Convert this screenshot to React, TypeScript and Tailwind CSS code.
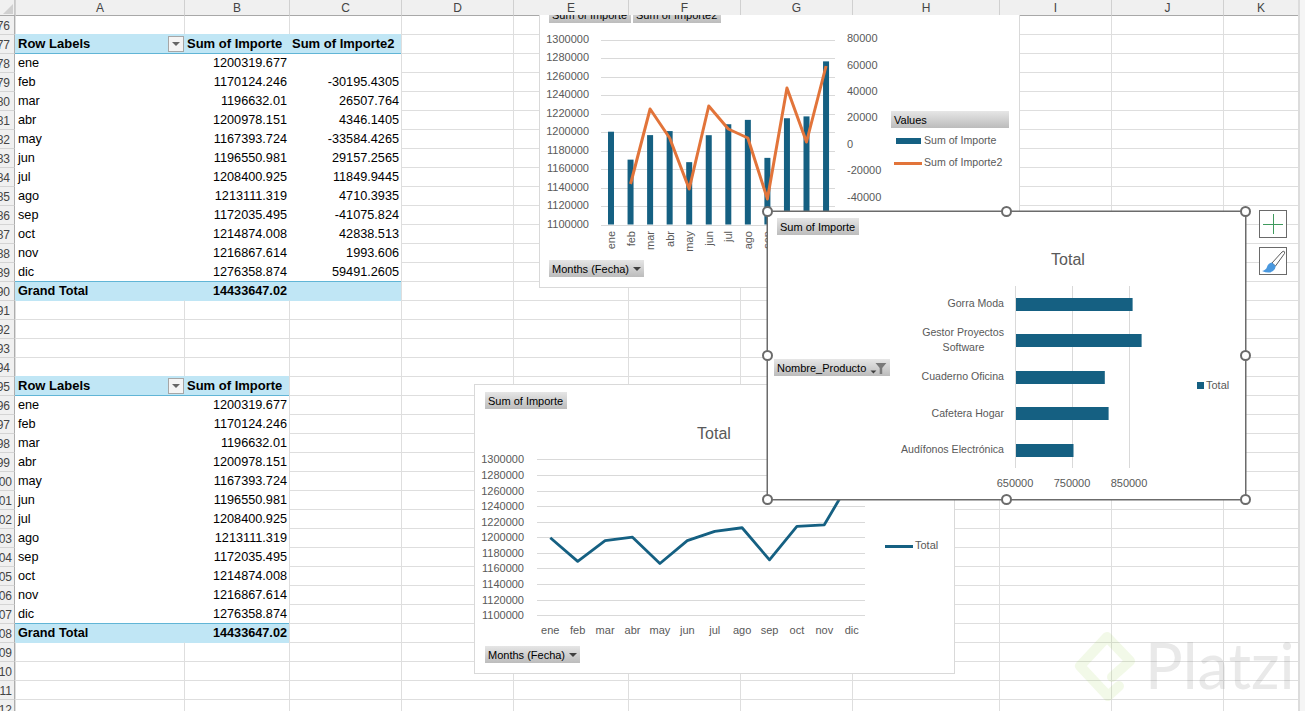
import React from "react";

const colW = ["w-[169px]", "w-[105px]", "w-[112px]", "w-[112px]", "w-[115px]", "w-[112px]", "w-[112px]", "w-[147px]", "w-[112px]", "w-[112px]", "w-[75px]"];
const colN = ["A", "B", "C", "D", "E", "F", "G", "H", "I", "J", "K"];
const months = ["ene", "feb", "mar", "abr", "may", "jun", "jul", "ago", "sep", "oct", "nov", "dic"];
const imp = ["1200319.677", "1170124.246", "1196632.01", "1200978.151", "1167393.724", "1196550.981", "1208400.925", "1213111.319", "1172035.495", "1214874.008", "1216867.614", "1276358.874"];
const diff = ["", "-30195.4305", "26507.764", "4346.1405", "-33584.4265", "29157.2565", "11849.9445", "4710.3935", "-41075.824", "42838.513", "1993.606", "59491.2605"];
const vals = imp.map(Number);

type Kind = "head" | "body" | "first" | "total";
function tableCells(r: number): { kind: Kind; texts: string[] } | null {
  if (r >= 77 && r <= 90) {
    if (r === 77) return { kind: "head", texts: ["Row Labels", "Sum of Importe", "Sum of Importe2"] };
    if (r === 90) return { kind: "total", texts: ["Grand Total", "14433647.02", ""] };
    return { kind: r === 78 ? "first" : "body", texts: [months[r - 78], imp[r - 78], diff[r - 78]] };
  }
  if (r >= 95 && r <= 108) {
    if (r === 95) return { kind: "head", texts: ["Row Labels", "Sum of Importe"] };
    if (r === 108) return { kind: "total", texts: ["Grand Total", "14433647.02"] };
    return { kind: r === 96 ? "first" : "body", texts: [months[r - 96], imp[r - 96]] };
  }
  return null;
}

function Cell({ i, text, kind, top }: { i: number; text?: string; kind?: Kind; top?: string }) {
  const w = colW[i];
  if (!kind) return <div className={`${w} h-full shrink-0 border-l border-l-[#dedede] border-t ${top ?? "border-t-[#dedede]"}`} />;
  const fill =
    kind === "head"
      ? "bg-[#c0e6f5] font-bold text-[13px] pt-[1px]"
      : kind === "total"
        ? "bg-[#c0e6f5] border-t border-[#61b5d6] font-bold text-[12.700px] pt-[1px]"
        : kind === "first"
          ? "bg-white border-t border-[#61b5d6] text-[12.700px] pt-[2px]"
          : "bg-white text-[12.700px] pt-[3px]";
  const align = kind === "head" || i === 0 ? "justify-start pl-[3px]" : "justify-end pr-[2px]";
  return (
    <div className={`${w} ${fill} ${align} relative h-full shrink-0 flex items-center whitespace-nowrap text-black`}>
      {text}
      {kind === "head" && i === 0 && (
        <div className="absolute right-[0px] top-[2px] w-[16px] h-[16px] bg-[#f4f4f4] border border-[#a6a6a6] flex items-center justify-center">
          <div className="w-0 h-0 border-l-[4px] border-r-[4px] border-t-[4px] border-l-transparent border-r-transparent border-t-[#666666]" />
        </div>
      )}
    </div>
  );
}

function Row({ r }: { r: number }) {
  const t = tableCells(r);
  const filledAbove = r === 91 ? 3 : r === 109 ? 2 : 0;
  return (
    <div className="flex h-[19px] shrink-0">
      <div className={`w-[15px] h-full shrink-0 flex items-center justify-end pt-[1px] bg-[#f0f0f0] border-r border-r-[#adadad] border-t ${r === 76 ? "border-t-[#a8a8a8]" : "border-t-[#d4d4d4]"} text-[12px] text-[#444444] whitespace-nowrap ${r < 100 ? "pr-[4px]" : "pr-[2px]"}`}>
        {r}
      </div>
      {colW.map((_, i) =>
        t && i < t.texts.length ? (
          <Cell key={i} i={i} text={t.texts[i]} kind={t.kind} />
        ) : (
          <Cell key={i} i={i} top={r === 76 ? "border-t-[#a8a8a8]" : i < filledAbove ? "border-t-[#c0e6f5]" : undefined} />
        ),
      )}
    </div>
  );
}

function Slicer({ className, label, arrow, filter }: { className?: string; label: string; arrow?: boolean; filter?: boolean }) {
  return (
    <div className={`h-[17px] shrink-0 bg-linear-to-b from-[#e6e6e6] to-[#bcbcbc] flex items-center pl-[3px] pt-[1px] text-[11px] text-black whitespace-nowrap ${className ?? ""}`}>
      {label}
      {arrow && <div className="ml-[4px] w-0 h-0 border-l-[4px] border-r-[4px] border-t-[4px] border-l-transparent border-r-transparent border-t-[#404040]" />}
      {filter && (
        <svg width="26" height="17" viewBox="0 0 26 17" className="ml-[2px]">
          <path d="M3 11h7l-3.500 3.500z" fill="#404040" />
          <path d="M9 2h13l-5 6v7h-3V8z" fill="#7a7a7a" />
        </svg>
      )}
    </div>
  );
}

const gridTxt = { fontSize: 11, fill: "#595959" };
const labelTxt = { fontSize: 10.6, fill: "#595959" };

function Chart1() {
  const ys = Array.from({ length: 11 }, (_, i) => 39.5 + i * 18.5);
  const xs = months.map((_, i) => 611 + i * 19.55);
  const line = [184, 109, 138, 189, 106, 129, 138, 199, 88, 142, 66];
  return (
    <div className="absolute left-[539px] top-0 w-[481px] h-[288px] bg-white border border-[#d9d9d9] flex flex-col justify-between pl-[9px] pt-[5px] pb-[10px]">
      <svg width="479" height="286" viewBox="540 1 479 286" className="absolute left-0 top-0">
        {ys.map((y, i) => (
          <g key={i}>
            <line x1="601" x2="835" y1={Math.round(y) + 0.5} y2={Math.round(y) + 0.5} stroke="#d9d9d9" />
            <text x="589" y={y + 3} textAnchor="end" {...gridTxt}>{1300000 - i * 20000}</text>
          </g>
        ))}
        {vals.map((v, i) => {
          const h = ((v - 1100000) / 200000) * 185;
          return <rect key={i} x={xs[i] - 3} y={224.5 - h} width="6" height={h} fill="#156082" />;
        })}
        <polyline points={line.map((y, i) => `${xs[i + 1]},${y}`).join(" ")} fill="none" stroke="#e2743a" strokeWidth="3" strokeLinejoin="round" />
        {months.map((m, i) => (
          <text key={m} transform={`rotate(-90 ${xs[i] + 4} 231)`} x={xs[i] + 4} y="231" textAnchor="end" {...gridTxt}>{m}</text>
        ))}
        {[["80000", 38], ["60000", 65], ["40000", 91], ["20000", 117], ["0", 144], ["-20000", 170], ["-40000", 197]].map(([t, y]) => (
          <text key={t as string} x="847" y={(y as number) + 4} {...gridTxt}>{t}</text>
        ))}
        <rect x="896" y="138" width="25" height="6" fill="#156082" />
        <text x="924" y="144" {...labelTxt}>Sum of Importe</text>
        <line x1="894" x2="922" y1="163.500" y2="163.500" stroke="#e2743a" strokeWidth="3" />
        <text x="924" y="166" {...labelTxt}>Sum of Importe2</text>
      </svg>
      <div className="relative flex gap-[2px]">
        <Slicer className="w-[82px]" label="Sum of Importe" />
        <Slicer className="w-[88px]" label="Sum of Importe2" />
      </div>
      <Slicer className="relative w-[95px]" label="Months (Fecha)" arrow />
      <Slicer className="absolute left-[351px] top-[110px] w-[118px]" label="Values" />
    </div>
  );
}

function Chart2() {
  const ys = [459.5, 475.5, 491.5, 506.5, 522.5, 537.5, 553.5, 568.5, 584.5, 600.5, 615.5];
  const xs = months.map((_, i) => 550.3 + i * 27.4);
  const pts = vals.map((v, i) => `${xs[i]},${616.2 - ((v - 1100000) / 200000) * 156.4}`).join(" ");
  return (
    <div className="absolute left-[474px] top-[384px] w-[481px] h-[290px] bg-white border border-[#d9d9d9] flex flex-col justify-between pl-[10px] pt-[7px] pb-[10px]">
      <svg width="479" height="288" viewBox="475 385 479 288" className="absolute left-0 top-0">
        <text x="714" y="439" textAnchor="middle" fontSize="16" fill="#595959">Total</text>
        {ys.map((y, i) => (
          <g key={i}>
            <line x1="537" x2="865" y1={y} y2={y} stroke="#d9d9d9" />
            <text x="524" y={y + 3.500} textAnchor="end" {...gridTxt}>{1300000 - i * 20000}</text>
          </g>
        ))}
        <polyline points={pts} fill="none" stroke="#156082" strokeWidth="2.800" strokeLinejoin="round" />
        {months.map((m, i) => (
          <text key={m} x={xs[i]} y="634" textAnchor="middle" {...gridTxt}>{m}</text>
        ))}
        <line x1="885" x2="913" y1="546.500" y2="546.500" stroke="#156082" strokeWidth="3" />
        <text x="915" y="549" {...gridTxt}>Total</text>
      </svg>
      <Slicer className="relative w-[82px]" label="Sum of Importe" />
      <Slicer className="relative w-[95px]" label="Months (Fecha)" arrow />
    </div>
  );
}

function Chart3() {
  const bars = [
    [298, 1132.6],
    [334, 1141.6],
    [371, 1104.8],
    [407, 1108.6],
    [444, 1073.5],
  ];
  const handles = [
    "left-[-6px] top-[-6px]",
    "left-[233px] top-[-6px]",
    "left-[472px] top-[-6px]",
    "left-[-6px] top-[138px]",
    "left-[472px] top-[138px]",
    "left-[-6px] top-[282px]",
    "left-[233px] top-[282px]",
    "left-[472px] top-[282px]",
  ];
  return (
    <div className="absolute left-[767px] top-[211px] w-[479px] h-[289px] bg-white border border-[#6b6b6b] ring-[0.5px] ring-[#6b6b6b] flex flex-col items-start gap-[124px] pl-[6px] pt-[6px]">
      <svg width="477" height="287" viewBox="768 212 477 287" className="absolute left-0 top-0">
        <text x="1068" y="265" textAnchor="middle" fontSize="16" fill="#595959">Total</text>
        {[1015.5, 1072.5, 1129.5].map((x) => (
          <line key={x} x1={x} x2={x} y1="286" y2="468" stroke="#d9d9d9" />
        ))}
        {bars.map(([y, e]) => (
          <rect key={y} x="1016" y={y} width={e - 1016} height="13" fill="#156082" />
        ))}
        <text x="1004" y="307" textAnchor="end" {...labelTxt}>Gorra Moda</text>
        <text x="1004" y="336" textAnchor="end" {...labelTxt}>Gestor Proyectos</text>
        <text x="963.500" y="351" textAnchor="middle" {...labelTxt}>Software</text>
        <text x="1004" y="380" textAnchor="end" {...labelTxt}>Cuaderno Oficina</text>
        <text x="1004" y="417" textAnchor="end" {...labelTxt}>Cafetera Hogar</text>
        <text x="1004" y="453" textAnchor="end" {...labelTxt}>Audífonos Electrónica</text>
        {[["650000", 1015], ["750000", 1072], ["850000", 1129]].map(([t, x]) => (
          <text key={t as string} x={x as number} y="487" textAnchor="middle" {...gridTxt}>{t}</text>
        ))}
        <rect x="1197" y="382" width="7" height="7" fill="#156082" />
        <text x="1206" y="389" {...gridTxt}>Total</text>
      </svg>
      <Slicer className="relative ml-[3px] w-[82px]" label="Sum of Importe" />
      <Slicer className="relative w-[116px]" label="Nombre_Producto" filter />
      {handles.map((h) => (
        <div key={h} className={`absolute ${h} size-[11px] rounded-full bg-white border-2 border-[#6b6b6b]`} />
      ))}
    </div>
  );
}

function SideButtons() {
  return (
    <div className="absolute left-[1259px] top-[210px] flex flex-col gap-[9px]">
      <div className="size-[28px] bg-white border border-[#6a6a6a] flex items-center justify-center">
        <svg width="20" height="20" viewBox="0 0 20 20">
          <path d="M0 10.500h20M10.500 0v20" stroke="#3f9a5d" strokeWidth="1" />
        </svg>
      </div>
      <div className="size-[28px] bg-white border border-[#6a6a6a]">
        <svg width="26" height="26" viewBox="0 0 26 26">
          <path d="M12 15 L22 4 Q25 2 24.500 5.500 L15.500 18 Z" fill="#ffffff" stroke="#5a5a5a" strokeWidth="1" />
          <path d="M12 14.500 Q8 15 7 19 Q6 22 2 23 Q9 26 13 23 Q16 20.500 15.500 18 Z" fill="#4a98de" />
        </svg>
      </div>
    </div>
  );
}

function Watermark() {
  return (
    <>
      <svg width="70" height="80" viewBox="1070 626 70 80" className="absolute left-[1070px] top-[626px]">
        <path
          d="M1119 686 L1108 696 L1080 666 L1107 637 L1130 661 L1112 677"
          fill="none"
          stroke="#98ca3f"
          strokeOpacity="0.12"
          strokeWidth="10"
          strokeLinejoin="round"
          strokeLinecap="round"
        />
      </svg>
      <div className="absolute left-[1145px] top-[629px] font-['Lato',sans-serif] text-[63px] leading-[72px] text-[#8f8f8f]/20 whitespace-nowrap">
        Platzi
      </div>
    </>
  );
}

export default function App() {
  const rows = Array.from({ length: 37 }, (_, i) => 76 + i);
  return (
    <div className="relative w-[1305px] h-[711px] overflow-hidden bg-white font-['Liberation_Sans',Arial,sans-serif]">
      <div className="relative z-20 flex h-[15px] bg-[#f0f0f0]">
        <div className="w-[15px] shrink-0 border-r border-[#c8c8c8] relative overflow-hidden">
          <div className="absolute right-[1px] bottom-[1px] w-0 h-0 border-l-[10px] border-b-[10px] border-l-transparent border-b-[#d0d0d0]" />
        </div>
        {colN.map((c, i) => (
          <div key={c} className={`${colW[i]} shrink-0 h-full flex items-center justify-center border-l border-[#d0d0d0] text-[12px] text-[#444444]`}>
            {c}
          </div>
        ))}
        <div className="flex-1" />
      </div>
      <div className="flex flex-col">
        {rows.map((r) => (
          <Row key={r} r={r} />
        ))}
      </div>
      <Chart1 />
      <Chart2 />
      <Chart3 />
      <SideButtons />
      <Watermark />
      <div className="absolute right-0 top-0 bottom-0 z-30 w-[7px] bg-[#f5f5f5] border-l-2 border-[#dcdcdc]" />
    </div>
  );
}
